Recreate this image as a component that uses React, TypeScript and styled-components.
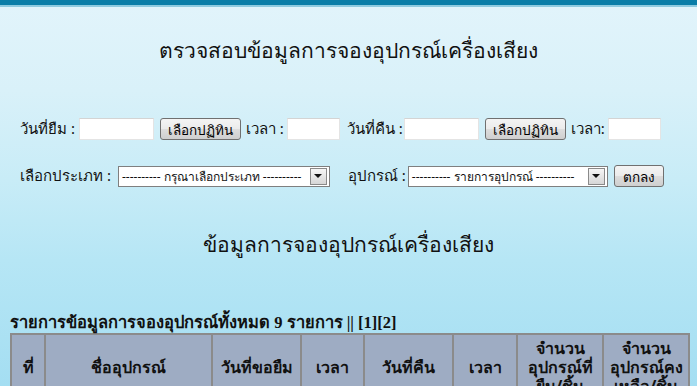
import React from "react";
import styled, { createGlobalStyle } from "styled-components";

const GlobalStyle = createGlobalStyle`
  html, body {
    margin: 0;
    padding: 0;
  }
  body {
    font-family: Tahoma, "Noto Sans", "DejaVu Sans", sans-serif;
    color: #111;
  }
`;

const Page = styled.div`
  width: 697px;
  height: 386px;
  overflow: hidden;
  background: linear-gradient(
    to bottom,
    #e2f4fb 0px,
    #d9f1f9 90px,
    #c8ecf7 180px,
    #b6e6f5 260px,
    #a4def2 386px
  );
`;

const TopBar = styled.div`
  height: 5px;
  background: #0b7ea8;
  border-bottom: 2px solid #8fcbe0;
`;

const Heading = styled.div<{ top: number }>`
  margin-top: ${({ top }) => top}px;
  text-align: center;
  font-size: 21px;
  line-height: 30px;
  color: #111;
`;

const FormRow = styled.div<{ top: number }>`
  display: flex;
  align-items: center;
  margin-top: ${({ top }) => top}px;
  padding-left: 20px;
  height: 22px;
  font-size: 15px;
`;

const Label = styled.span<{ gap?: number }>`
  margin-left: ${({ gap }) => gap ?? 0}px;
  white-space: nowrap;
`;

const TextBox = styled.input<{ w: number; gap?: number }>`
  width: ${({ w }) => w}px;
  height: 22px;
  box-sizing: border-box;
  margin: 0 0 0 ${({ gap }) => gap ?? 0}px;
  border: 1px solid #e4e4e4;
  border-top-color: #d4d4d4;
  background: #fff;
  padding: 0 3px;
`;

const Button = styled.button<{ w: number; gap?: number }>`
  width: ${({ w }) => w}px;
  height: 22px;
  margin: 0 0 0 ${({ gap }) => gap ?? 0}px;
  padding: 0;
  border: 1px solid #707070;
  border-radius: 3px;
  background: linear-gradient(to bottom, #f4f4f4 0%, #ebebeb 50%, #dddddd 51%, #cfcfcf 100%);
  font-family: Tahoma, "Noto Sans", "DejaVu Sans", sans-serif;
  font-size: 13.5px;
  color: #000;
`;

const SelectBox = styled.div<{ w: number; gap?: number }>`
  display: flex;
  align-items: center;
  width: ${({ w }) => w}px;
  height: 21px;
  box-sizing: border-box;
  margin-left: ${({ gap }) => gap ?? 0}px;
  border: 1px solid #7f7f7f;
  background: #fff;
  font-size: 12px;
`;

const SelectText = styled.span`
  flex: 1;
  padding-left: 3px;
  white-space: nowrap;
  overflow: hidden;
`;

const ArrowBox = styled.span`
  display: flex;
  align-items: center;
  justify-content: center;
  flex: none;
  width: 15px;
  height: 15px;
  margin-right: 2px;
  border: 1px solid #8a8a8a;
  background: linear-gradient(to bottom, #f6f6f6, #d6d6d6);

  &::after {
    content: "";
    border-left: 4px solid transparent;
    border-right: 4px solid transparent;
    border-top: 4px solid #111;
  }
`;

const Summary = styled.div`
  margin: 56px 0 0 10px;
  font-family: "Liberation Serif", Tahoma, serif;
  font-weight: bold;
  font-size: 16.5px;
  line-height: 16px;
`;

const Table = styled.table`
  margin: 2px 0 0 10px;
  border-collapse: collapse;
  width: 678px;
  table-layout: fixed;
`;

const Th = styled.th<{ w: number }>`
  box-sizing: border-box;
  width: ${({ w }) => w}px;
  background: #9eacc3;
  border: 2px solid #8b8b8b;
  font-size: 16px;
  font-weight: bold;
  line-height: 19px;
  padding: 4px 2px;
  color: #111;
  text-align: center;
`;

const columns: { title: string; w: number }[] = [
  { title: "ที่", w: 34 },
  { title: "ชื่ออุปกรณ์", w: 167 },
  { title: "วันที่ขอยืม", w: 89 },
  { title: "เวลา", w: 63 },
  { title: "วันที่คืน", w: 89 },
  { title: "เวลา", w: 64 },
  { title: "จำนวนอุปกรณ์ที่ยืม/ชิ้น", w: 86 },
  { title: "จำนวนอุปกรณ์คงเหลือ/ชิ้น", w: 86 },
];

export default function App() {
  return (
    <Page>
      <GlobalStyle />
      <TopBar />
      <Heading top={28}>ตรวจสอบข้อมูลการจองอุปกรณ์เครื่องเสียง</Heading>

      <FormRow top={53}>
        <Label>วันที่ยืม :</Label>
        <TextBox w={75} gap={4} />
        <Button w={81} gap={6}>เลือกปฏิทิน</Button>
        <Label gap={5}>เวลา :</Label>
        <TextBox w={53} gap={3} />
        <Label gap={7}>วันที่คืน :</Label>
        <TextBox w={75} gap={1} />
        <Button w={81} gap={6}>เลือกปฏิทิน</Button>
        <Label gap={5}>เวลา:</Label>
        <TextBox w={53} gap={3} />
      </FormRow>

      <FormRow top={25}>
        <Label>เลือกประเภท :</Label>
        <SelectBox w={212} gap={7}>
          <SelectText>---------- กรุณาเลือกประเภท ----------</SelectText>
          <ArrowBox />
        </SelectBox>
        <Label gap={18}>อุปกรณ์ :</Label>
        <SelectBox w={200} gap={2}>
          <SelectText>---------- รายการอุปกรณ์ ----------</SelectText>
          <ArrowBox />
        </SelectBox>
        <Button w={50} gap={6}>ตกลง</Button>
      </FormRow>

      <Heading top={42}>ข้อมูลการจองอุปกรณ์เครื่องเสียง</Heading>

      <Summary>รายการข้อมูลการจองอุปกรณ์ทั้งหมด 9 รายการ || [1][2]</Summary>

      <Table>
        <thead>
          <tr>
            {columns.map((c, i) => (
              <Th key={i} w={c.w}>
                {c.title}
              </Th>
            ))}
          </tr>
        </thead>
      </Table>
    </Page>
  );
}
